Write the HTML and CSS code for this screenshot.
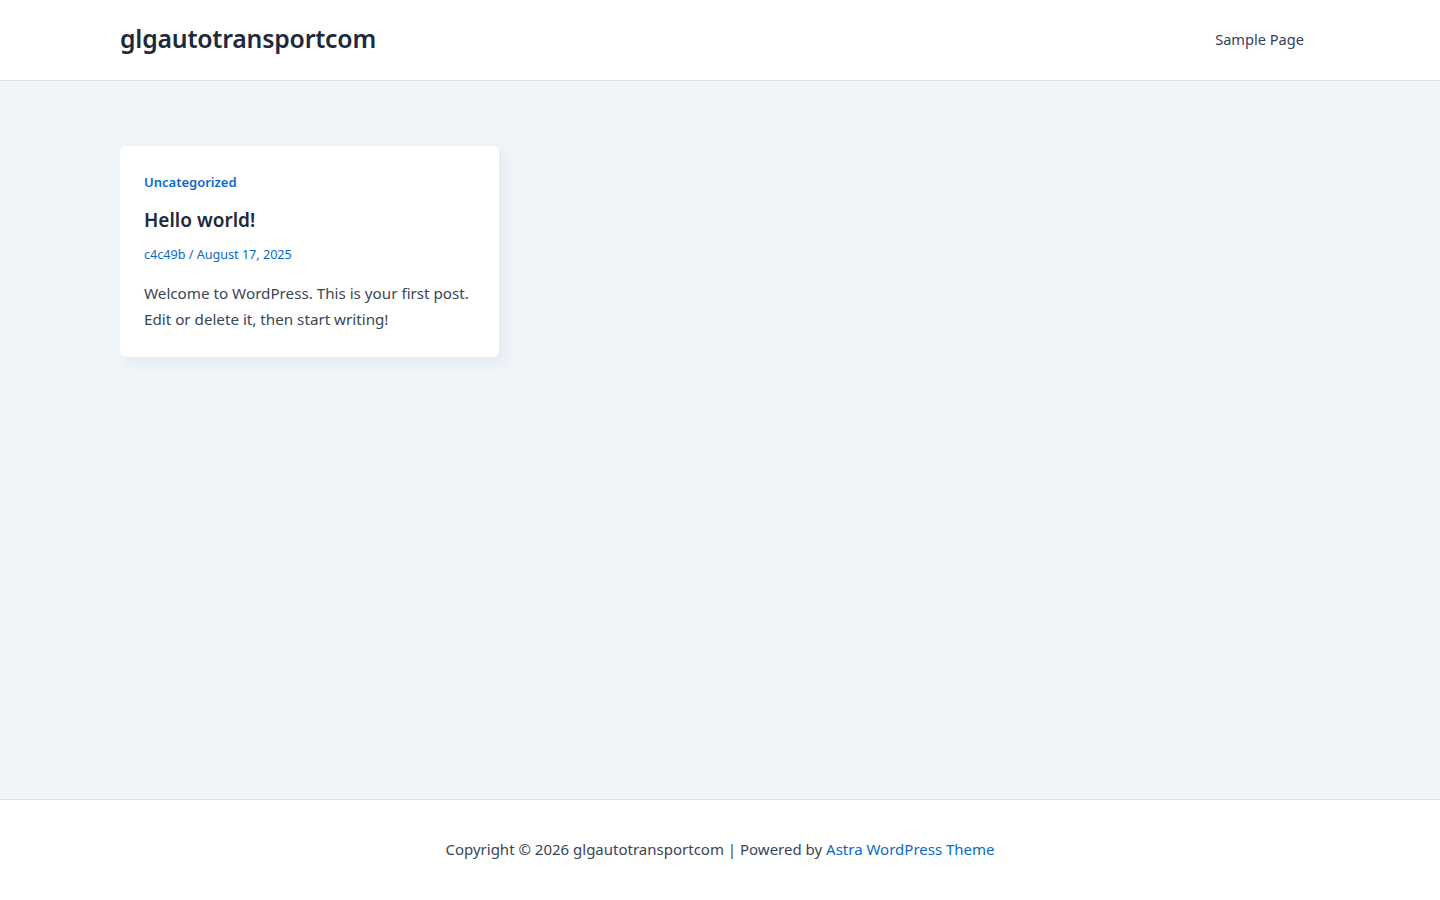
FILE: index.html
```html
<!DOCTYPE html>
<html lang="en">
<head>
<meta charset="utf-8">
<title>glgautotransportcom</title>
<link rel="stylesheet" href="styles.css">
</head>
<body>
<header class="site-header">
  <div class="container header-inner">
    <a class="site-title" href="#">glgautotransportcom</a>
    <nav class="nav"><a href="#">Sample Page</a></nav>
  </div>
</header>
<main class="site-main">
  <div class="container grid">
    <article class="card">
      <a class="cat" href="#">Uncategorized</a>
      <h2 class="post-title">Hello world!</h2>
      <div class="meta"><a href="#">c4c49b</a> / <a href="#">August 17, 2025</a></div>
      <p class="excerpt">Welcome to WordPress. This is your first post. Edit or delete it, then start writing!</p>
    </article>
  </div>
</main>
<footer class="site-footer">
  <p>Copyright © 2026 glgautotransportcom | Powered by <a href="#">Astra WordPress Theme</a></p>
</footer>
</body>
</html>
```
FILE: styles.css
```css
* { box-sizing: border-box; }
html, body { margin: 0; padding: 0; }
body {
  font-family: "Noto Sans", "Open Sans", sans-serif;
  color: #334155;
  background: #fff;
  height: 900px;
  display: flex;
  flex-direction: column;
}
a { text-decoration: none; color: #0a6ac4; }
.container { width: 1200px; margin: 0 auto; }
.site-header {
  height: 81px;
  border-bottom: 1px solid #dfe3e8;
  background: #fff;
  flex: none;
}
.header-inner {
  height: 80px;
  display: flex;
  align-items: center;
  justify-content: space-between;
}
.site-title {
  font-size: 24.8px;
  font-weight: 600;
  color: #1e293b;
  letter-spacing: -0.2px;
  margin-bottom: 4px;
}
.nav { padding-right: 16px; margin-bottom: 2px; }
.nav a { font-size: 14.6px; color: #334155; }
.site-main {
  flex: none;
  height: 718px;
  background: #f0f5fa;
  padding-top: 65px;
}
.grid {
  display: grid;
  grid-template-columns: repeat(3, 379px);
  gap: 31px;
}
.card {
  background: #fff;
  border-radius: 6px;
  padding: 25px 24px 25px;
  box-shadow: 6px 6px 14px rgba(30, 50, 90, 0.06);
}
.cat {
  display: block;
  font-size: 13px;
  font-weight: 600;
  line-height: 22px;
  color: #0a6ac4;
}
.post-title {
  margin: 14px 0 0;
  font-size: 19px;
  font-weight: 600;
  line-height: 26px;
  color: #1e293b;
}
.meta {
  margin-top: 12px;
  font-size: 12.6px;
  line-height: 20px;
  color: #0a6ac4;
}
.excerpt {
  margin: 15px 0 0;
  font-size: 15.2px;
  line-height: 26px;
  color: #3a4556;
}
.site-footer {
  flex: 1;
  border-top: 1px solid #dfe3e8;
  background: #fff;
  display: flex;
  align-items: center;
  justify-content: center;
}
.site-footer p {
  margin: 0 0 2px;
  font-size: 15px;
  color: #3a4556;
}
```
